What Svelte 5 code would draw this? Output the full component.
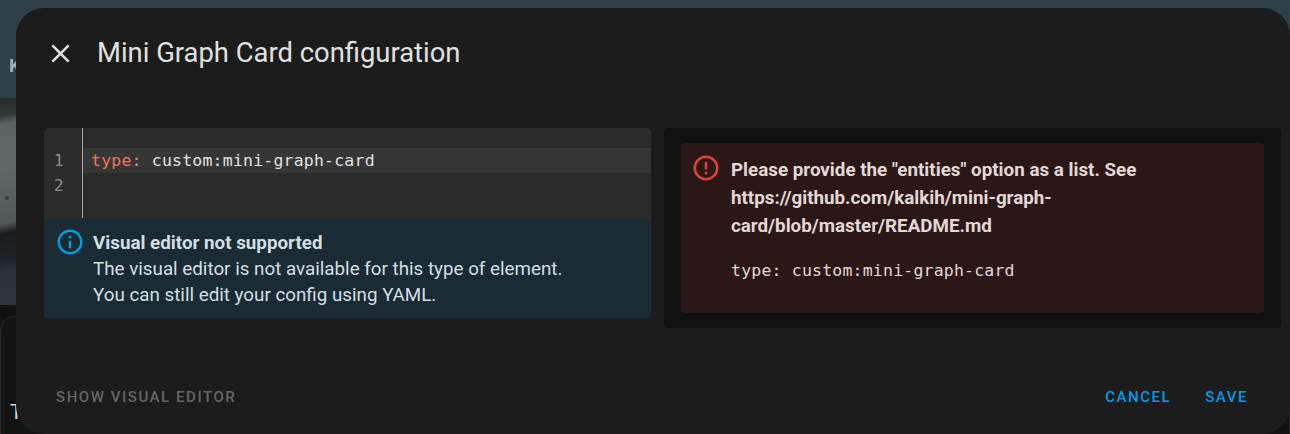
<script>
  const code = 'custom:mini-graph-card';
</script>

<div class="page">
  <div class="backdrop">
    <div class="b-top"><span class="k">K</span></div>
    <div class="b-photo"></div>
    <div class="b-bottom"><div class="b-card"><span class="t">T</span></div></div>
  </div>

  <section class="dialog">
    <header class="head">
      <svg class="close" viewBox="0 0 24 24" aria-hidden="true"><path d="M19 6.41 17.59 5 12 10.59 6.41 5 5 6.41 10.59 12 5 17.59 6.41 19 12 13.41 17.59 19 19 17.59 13.41 12z"/></svg>
      <h2>Mini Graph Card configuration</h2>
    </header>

    <div class="content">
      <div class="left">
        <div class="editor">
          <div class="gutter"><span>1</span><span>2</span></div>
          <div class="lines">
            <div class="line active"><span class="key">type</span><span class="colon">:</span> {code}</div>
            <div class="line"></div>
          </div>
        </div>
        <div class="info">
          <svg class="ico" viewBox="0 0 24 24" aria-hidden="true"><path d="M11 9h2V7h-2m1 13c-4.41 0-8-3.59-8-8s3.59-8 8-8 8 3.59 8 8-3.59 8-8 8m0-18A10 10 0 0 0 2 12a10 10 0 0 0 10 10 10 10 0 0 0 10-10A10 10 0 0 0 12 2m-1 15h2v-6h-2z"/></svg>
          <div class="info-text">
            <strong>Visual editor not supported</strong>
            <div>The visual editor is not available for this type of element.</div>
            <div>You can still edit your config using YAML.</div>
          </div>
        </div>
      </div>

      <div class="right">
        <div class="error">
          <svg class="ico err" viewBox="0 0 24 24" aria-hidden="true"><path d="M11 15h2v2h-2zm0-8h2v6h-2zm1-5C6.47 2 2 6.5 2 12a10 10 0 0 0 10 10 10 10 0 0 0 10-10A10 10 0 0 0 12 2m0 18a8 8 0 0 1-8-8 8 8 0 0 1 8-8 8 8 0 0 1 8 8 8 8 0 0 1-8 8"/></svg>
          <div class="err-text">
            <p>Please provide the "entities" option as a list. See https://github.com/kalkih/mini-graph-card/blob/master/README.md</p>
            <pre>type: {code}</pre>
          </div>
        </div>
      </div>
    </div>

    <footer class="actions">
      <button class="muted">Show visual editor</button>
      <div class="spacer"></div>
      <button>Cancel</button>
      <button>Save</button>
    </footer>
  </section>
</div>

<style>
  :global(body) { margin: 0; background: #111; }
  .page {
    position: relative;
    width: 1290px;
    height: 434px;
    overflow: hidden;
    font-family: Roboto, sans-serif;
  }
  .backdrop { display: flex; flex-direction: column; height: 100%; }
  .b-top { height: 98px; background: #2f3f48; position: relative; }
  .k { position: absolute; left: 9px; top: 54px; font-size: 19px; font-weight: 700; color: #a3adb2; }
  .b-photo {
    height: 207px;
    background:
      radial-gradient(circle at 7px 100px, #363c3e 0 1.5px, transparent 2.5px),
      linear-gradient(170deg, #26292a 0, #33383a 18px, #5a6262 26px, #5f6867 70px, #515958 124px, #1a1c1d 134px, #202325 160px, #2a3238 172px, #2e343a 207px);
    background-size: 16px 207px;
    background-repeat: no-repeat;
  }
  .b-bottom { flex: 1; background: #111; padding: 11px 0 0; }
  .b-card { height: 100%; background: #131313; border: 1px solid #2b2b2b; border-radius: 14px 0 0 0; position: relative; }
  .t { position: absolute; left: 9px; top: 83px; font-size: 21px; color: #d8d8d8; }

  .dialog {
    position: absolute;
    left: 16px;
    top: 8px;
    width: 1274px;
    height: 426px;
    box-sizing: border-box;
    background: #1c1c1c;
    border-radius: 28px;
    display: flex;
    flex-direction: column;
    padding: 0 9px 0 28px;
  }
  .head { display: flex; align-items: center; height: 90px; }
  .close { width: 31px; height: 31px; margin-left: 1px; margin-right: 21px; fill: #e1e1e1; flex: none; }
  h2 { margin: 0; font-size: 27.4px; font-weight: 400; color: #e1e1e1; line-height: 32px; }

  .content {
    display: grid;
    grid-template-columns: 607px 617px;
    column-gap: 13px;
    margin-top: 30px;
    align-items: start;
  }
  .left { display: flex; flex-direction: column; }
  .editor {
    height: 90px;
    display: flex;
    background: #2b2b2b;
    border-radius: 4px 4px 0 0;
    font-family: "DejaVu Sans Mono", monospace;
    font-size: 16.5px;
    letter-spacing: 0.2px;
    line-height: 25px;
  }
  .gutter {
    width: 39px;
    box-sizing: border-box;
    flex: none;
    border-right: 1px solid #a8a8a8;
    padding: 20px 18px 0 0;
    color: #8a8a8a;
    display: flex;
    flex-direction: column;
    align-items: flex-end;
  }
  .lines { flex: 1; padding-top: 20px; }
  .line { height: 25px; padding-left: 8px; color: #e1e1e1; white-space: pre; }
  .active { background: #363636; }
  .key { color: #e9775c; }
  .colon { color: #d19a80; }

  .info {
    display: flex;
    height: 100px;
    box-sizing: border-box;
    background: #1a2b33;
    border-radius: 0 0 4px 4px;
    padding: 12px 0 0 12px;
    color: #d5dee3;
    font-size: 18.8px;
    line-height: 26px;
  }
  .ico { width: 30px; height: 30px; flex: none; margin: -3.5px 8.5px 0 -1.5px; fill: #039be5; }
  .info-text strong { font-weight: 700; display: block; }

  .right {
    background: #111;
    border-radius: 4px;
    height: 200px;
    padding: 15px 17px;
    box-sizing: border-box;
  }
  .error {
    height: 170px;
    box-sizing: border-box;
    display: flex;
    background: #2b1816;
    border-radius: 4px;
    padding: 13px 12px 0 12px;
    color: #e2d8d7;
  }
  .ico.err { fill: #db4437; margin: -3.5px 10.5px 0 -2.5px; }
  .err-text { width: 440px; }
  p { margin: 0; font-size: 18.8px; font-weight: 700; line-height: 28px; }
  pre {
    margin: 18px 0 0;
    font-family: "DejaVu Sans Mono", monospace;
    font-size: 16.5px;
    letter-spacing: 0.2px;
    line-height: 25px;
    color: #e2d8d7;
  }

  .actions { display: flex; align-items: center; margin-top: auto; height: 74px; padding: 0 33px 0 12px; box-sizing: border-box; }
  .spacer { flex: 1; }
  button {
    all: unset;
    font-family: Roboto, sans-serif;
    font-size: 15px;
    font-weight: 500;
    letter-spacing: 1.55px;
    text-transform: uppercase;
    color: #039be5;
    margin-left: 34px;
  }
  .muted { color: #666; margin-left: 0; }
</style>
